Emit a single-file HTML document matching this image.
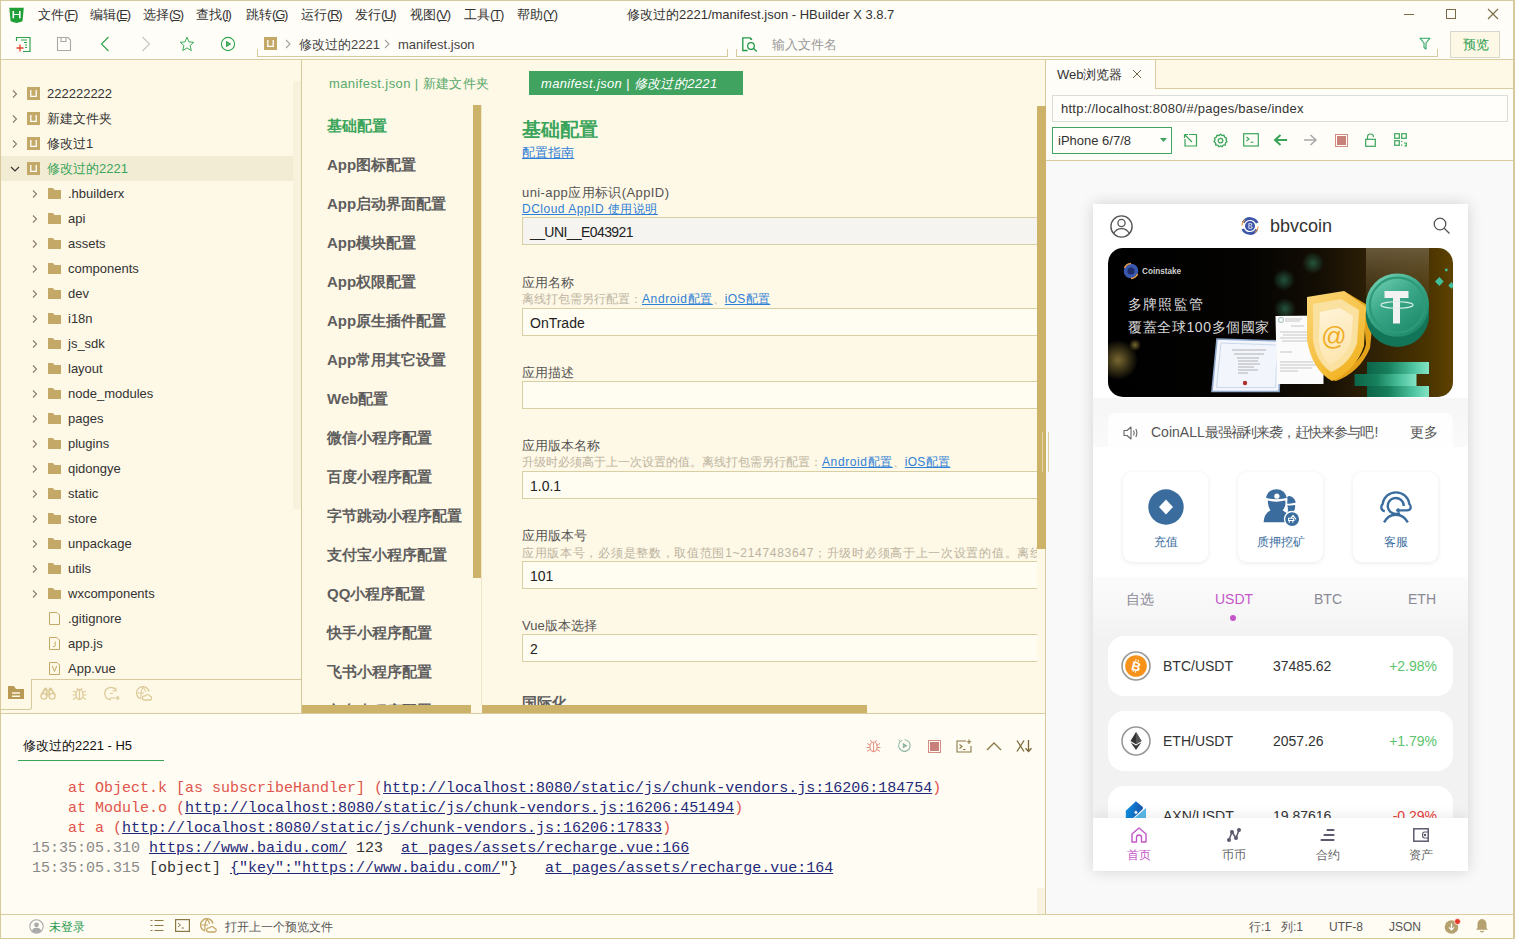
<!DOCTYPE html>
<html><head><meta charset="utf-8">
<style>
*{margin:0;padding:0;box-sizing:border-box}
html,body{width:1515px;height:939px;overflow:hidden}
body{text-spacing-trim:space-all;position:relative;background:#fef8e6;font-family:"Liberation Sans",sans-serif;font-size:13px;color:#333}
.a{position:absolute}
.t{position:absolute;white-space:nowrap;line-height:1}
/* frame */
#win{left:0;top:0;width:1515px;height:939px;border:1px solid #d6ca9c;border-right-width:2px}
#title{left:1px;top:1px;width:1512px;height:59px;background:#fffdf7;border-bottom:1px solid #d9cda0}
#side{left:1px;top:60px;width:300px;height:653px;background:#fef8e6}
#vdiv{left:301px;top:60px;width:1px;height:653px;background:#d6ca9c}
#editor{left:302px;top:60px;width:743px;height:653px;background:#fef8e6}
#rdiv{left:1045px;top:60px;width:1px;height:854px;background:#d6ca9c}
#console{left:1px;top:713px;width:1044px;height:201px;background:#fffcf3;border-top:1px solid #d9cda0}
#status{left:1px;top:914px;width:1512px;height:24px;background:#fffcf3;border-top:1px solid #d9cda0}
#right{left:1046px;top:60px;width:467px;height:854px;background:#fffdf7}
</style></head><body>
<div class="a" id="title"></div>

<!-- title bar -->
<svg class="a" style="left:9px;top:7px" width="16" height="17" viewBox="0 0 16 17"><path d="M0.3 0.8H14.8L13.5 14.2Q10.5 15.2 7.5 16Q4.5 15.2 1.6 14.2Z" fill="#1f9f38"/><path d="M3.5 3.9H5.1V7.1H10V3.9H11.6V11.3H10V8H5.1V11.3H3.5Z" fill="#fff"/></svg>
<div class="t" style="left:38px;top:8px">文件<span style="letter-spacing:-1.2px">(<u>F</u>)</span></div>
<div class="t" style="left:90px;top:8px">编辑<span style="letter-spacing:-1.2px">(<u>E</u>)</span></div>
<div class="t" style="left:143px;top:8px">选择<span style="letter-spacing:-1.2px">(<u>S</u>)</span></div>
<div class="t" style="left:196px;top:8px">查找<span style="letter-spacing:-1.2px">(<u>I</u>)</span></div>
<div class="t" style="left:246px;top:8px">跳转<span style="letter-spacing:-1.2px">(<u>G</u>)</span></div>
<div class="t" style="left:301px;top:8px">运行<span style="letter-spacing:-1.2px">(<u>R</u>)</span></div>
<div class="t" style="left:355px;top:8px">发行<span style="letter-spacing:-1.2px">(<u>U</u>)</span></div>
<div class="t" style="left:410px;top:8px">视图<span style="letter-spacing:-1.2px">(<u>V</u>)</span></div>
<div class="t" style="left:464px;top:8px">工具<span style="letter-spacing:-1.2px">(<u>T</u>)</span></div>
<div class="t" style="left:517px;top:8px">帮助<span style="letter-spacing:-1.2px">(<u>Y</u>)</span></div>
<div class="t" style="left:627px;top:8px">修改过的2221/manifest.json - HBuilder X 3.8.7</div>
<div class="a" style="left:1404px;top:14px;width:10px;height:1px;background:#7a6a45"></div>
<div class="a" style="left:1446px;top:9px;width:10px;height:10px;border:1px solid #7a6a45"></div>
<svg class="a" style="left:1487px;top:8px" width="12" height="12" viewBox="0 0 12 12"><path d="M1 1L11 11M11 1L1 11" stroke="#7a6a45" stroke-width="1.1"/></svg>
<!-- toolbar -->
<svg class="a" style="left:15px;top:36px" width="17" height="17" viewBox="0 0 17 17"><path d="M1.5 5V1.5H15V15.5H8" stroke="#2ea24e" stroke-width="1.2" fill="none"/><path d="M6 4H12M9 6.5H12M10 9H12M10 11.5H12" stroke="#2ea24e" stroke-width="1.2"/><path d="M5 8.5V15.5M1.5 12H8.5" stroke="#d9452b" stroke-width="1.3"/></svg>
<svg class="a" style="left:56px;top:36px" width="16" height="16" viewBox="0 0 16 16"><path d="M1.5 1.5H12L14.5 4V14.5H1.5Z" stroke="#a8a8a8" stroke-width="1.1" fill="none"/><path d="M5 1.5V5.5H10V1.5" stroke="#a8a8a8" stroke-width="1.1" fill="none"/></svg>
<svg class="a" style="left:100px;top:36px" width="10" height="16" viewBox="0 0 10 16"><path d="M8.5 1L1.5 8L8.5 15" stroke="#31a553" stroke-width="1.2" fill="none"/></svg>
<svg class="a" style="left:141px;top:36px" width="10" height="16" viewBox="0 0 10 16"><path d="M1.5 1L8.5 8L1.5 15" stroke="#c8c8c8" stroke-width="1.2" fill="none"/></svg>
<svg class="a" style="left:179px;top:36px" width="16" height="16" viewBox="0 0 16 16"><path d="M8 1.2L10 5.9L14.8 6.3L11.1 9.5L12.3 14.6L8 11.9L3.7 14.6L4.9 9.5L1.2 6.3L6 5.9Z" stroke="#31a553" stroke-width="0.95" fill="none" stroke-linejoin="round"/></svg>
<svg class="a" style="left:220px;top:36px" width="16" height="16" viewBox="0 0 16 16"><circle cx="8" cy="8" r="6.6" stroke="#31a553" stroke-width="1.1" fill="none"/><path d="M6.6 5.6V10.4L10.4 8Z" stroke="#31a553" stroke-width="1.1" fill="#31a553" stroke-linejoin="round"/><path d="M7.6 7.2V8.8L8.8 8Z" fill="#fffdf7"/></svg>
<div class="a" style="left:257px;top:49px;width:471px;height:8px;border-left:1px solid #d6ca9c;border-right:1px solid #d6ca9c;border-bottom:1px solid #d6ca9c"></div>
<div class="a" style="left:736px;top:49px;width:702px;height:8px;border-left:1px solid #d6ca9c;border-right:1px solid #d6ca9c;border-bottom:1px solid #d6ca9c"></div>
<svg class="a" style="left:264px;top:37px" width="13" height="13" viewBox="0 0 13 13"><rect width="13" height="13" fill="#c4a867"/><path d="M3.8 3V9.3H9.2V3" stroke="#fff" stroke-width="1.3" fill="none"/></svg>
<svg class="a" style="left:284px;top:38px" width="8" height="12" viewBox="0 0 8 12"><path d="M2 2L6 6L2 10" stroke="#a0a0a0" stroke-width="1.1" fill="none"/></svg>
<div class="t" style="left:299px;top:38px;color:#444">修改过的2221</div>
<svg class="a" style="left:383px;top:38px" width="8" height="12" viewBox="0 0 8 12"><path d="M2 2L6 6L2 10" stroke="#a0a0a0" stroke-width="1.1" fill="none"/></svg>
<div class="t" style="left:398px;top:38px;color:#444">manifest.json</div>
<svg class="a" style="left:742px;top:37px" width="16" height="15" viewBox="0 0 16 15"><path d="M5.5 13.5H0.8V0.8H8L10 2.8" stroke="#1f9a45" stroke-width="1.3" fill="none"/><path d="M8.2 0.8L10 2.7H8.2Z" fill="#1f9a45"/><circle cx="9" cy="9" r="3.3" stroke="#1f9a45" stroke-width="1.3" fill="none"/><path d="M11.3 11.3L14.8 14.5" stroke="#1f9a45" stroke-width="1.3"/></svg>
<div class="t" style="left:772px;top:38px;color:#999">输入文件名</div>
<svg class="a" style="left:1419px;top:37px" width="12" height="13" viewBox="0 0 12 13"><path d="M1 1.2H11L7 6V12L5 10.5V6Z" stroke="#2fa86a" stroke-width="1.1" fill="none" stroke-linejoin="round"/></svg>
<div class="a" style="left:1450px;top:31px;width:50px;height:27px;border:1px solid #d9d6cc;background:#fdf8e6"></div>
<div class="t" style="left:1463px;top:38px;color:#2a9b4f">预览</div>
<div class="a" id="side"></div>
<div class="a" style="left:293px;top:81px;width:8px;height:428px;background:#f8f1dc"></div>
<div class="a" style="left:1px;top:156px;width:292px;height:25px;background:#f3ecd5"></div>
<svg class="a" style="left:11px;top:89px" width="8" height="10" viewBox="0 0 8 10"><path d="M2 1.5L5.5 5L2 8.5" stroke="#8a7d68" stroke-width="1.1" fill="none"/></svg>
<svg class="a" style="left:27px;top:87px" width="13" height="13" viewBox="0 0 13 13"><rect width="13" height="13" fill="#c4a867"/><path d="M3.8 3V9.3H9.2V3" stroke="#fff" stroke-width="1.3" fill="none"/></svg>
<div class="t" style="left:47px;top:87px;color:#333">222222222</div>
<svg class="a" style="left:11px;top:114px" width="8" height="10" viewBox="0 0 8 10"><path d="M2 1.5L5.5 5L2 8.5" stroke="#8a7d68" stroke-width="1.1" fill="none"/></svg>
<svg class="a" style="left:27px;top:112px" width="13" height="13" viewBox="0 0 13 13"><rect width="13" height="13" fill="#c4a867"/><path d="M3.8 3V9.3H9.2V3" stroke="#fff" stroke-width="1.3" fill="none"/></svg>
<div class="t" style="left:47px;top:112px;color:#333">新建文件夹</div>
<svg class="a" style="left:11px;top:139px" width="8" height="10" viewBox="0 0 8 10"><path d="M2 1.5L5.5 5L2 8.5" stroke="#8a7d68" stroke-width="1.1" fill="none"/></svg>
<svg class="a" style="left:27px;top:137px" width="13" height="13" viewBox="0 0 13 13"><rect width="13" height="13" fill="#c4a867"/><path d="M3.8 3V9.3H9.2V3" stroke="#fff" stroke-width="1.3" fill="none"/></svg>
<div class="t" style="left:47px;top:137px;color:#333">修改过1</div>
<svg class="a" style="left:10px;top:165px" width="10" height="8" viewBox="0 0 10 8"><path d="M1 2L5 6L9 2" stroke="#333" stroke-width="1.2" fill="none"/></svg>
<svg class="a" style="left:27px;top:162px" width="13" height="13" viewBox="0 0 13 13"><rect width="13" height="13" fill="#c4a867"/><path d="M3.8 3V9.3H9.2V3" stroke="#fff" stroke-width="1.3" fill="none"/></svg>
<div class="t" style="left:47px;top:162px;color:#3aa55a">修改过的2221</div>
<svg class="a" style="left:31px;top:189px" width="8" height="10" viewBox="0 0 8 10"><path d="M2 1.5L5.5 5L2 8.5" stroke="#8a7d68" stroke-width="1.1" fill="none"/></svg>
<svg class="a" style="left:48px;top:188px" width="13" height="11" viewBox="0 0 13 11"><path d="M0 0H5L6.5 2H13V11H0Z" fill="#c4a867"/></svg>
<div class="t" style="left:68px;top:187px">.hbuilderx</div>
<svg class="a" style="left:31px;top:214px" width="8" height="10" viewBox="0 0 8 10"><path d="M2 1.5L5.5 5L2 8.5" stroke="#8a7d68" stroke-width="1.1" fill="none"/></svg>
<svg class="a" style="left:48px;top:213px" width="13" height="11" viewBox="0 0 13 11"><path d="M0 0H5L6.5 2H13V11H0Z" fill="#c4a867"/></svg>
<div class="t" style="left:68px;top:212px">api</div>
<svg class="a" style="left:31px;top:239px" width="8" height="10" viewBox="0 0 8 10"><path d="M2 1.5L5.5 5L2 8.5" stroke="#8a7d68" stroke-width="1.1" fill="none"/></svg>
<svg class="a" style="left:48px;top:238px" width="13" height="11" viewBox="0 0 13 11"><path d="M0 0H5L6.5 2H13V11H0Z" fill="#c4a867"/></svg>
<div class="t" style="left:68px;top:237px">assets</div>
<svg class="a" style="left:31px;top:264px" width="8" height="10" viewBox="0 0 8 10"><path d="M2 1.5L5.5 5L2 8.5" stroke="#8a7d68" stroke-width="1.1" fill="none"/></svg>
<svg class="a" style="left:48px;top:263px" width="13" height="11" viewBox="0 0 13 11"><path d="M0 0H5L6.5 2H13V11H0Z" fill="#c4a867"/></svg>
<div class="t" style="left:68px;top:262px">components</div>
<svg class="a" style="left:31px;top:289px" width="8" height="10" viewBox="0 0 8 10"><path d="M2 1.5L5.5 5L2 8.5" stroke="#8a7d68" stroke-width="1.1" fill="none"/></svg>
<svg class="a" style="left:48px;top:288px" width="13" height="11" viewBox="0 0 13 11"><path d="M0 0H5L6.5 2H13V11H0Z" fill="#c4a867"/></svg>
<div class="t" style="left:68px;top:287px">dev</div>
<svg class="a" style="left:31px;top:314px" width="8" height="10" viewBox="0 0 8 10"><path d="M2 1.5L5.5 5L2 8.5" stroke="#8a7d68" stroke-width="1.1" fill="none"/></svg>
<svg class="a" style="left:48px;top:313px" width="13" height="11" viewBox="0 0 13 11"><path d="M0 0H5L6.5 2H13V11H0Z" fill="#c4a867"/></svg>
<div class="t" style="left:68px;top:312px">i18n</div>
<svg class="a" style="left:31px;top:339px" width="8" height="10" viewBox="0 0 8 10"><path d="M2 1.5L5.5 5L2 8.5" stroke="#8a7d68" stroke-width="1.1" fill="none"/></svg>
<svg class="a" style="left:48px;top:338px" width="13" height="11" viewBox="0 0 13 11"><path d="M0 0H5L6.5 2H13V11H0Z" fill="#c4a867"/></svg>
<div class="t" style="left:68px;top:337px">js_sdk</div>
<svg class="a" style="left:31px;top:364px" width="8" height="10" viewBox="0 0 8 10"><path d="M2 1.5L5.5 5L2 8.5" stroke="#8a7d68" stroke-width="1.1" fill="none"/></svg>
<svg class="a" style="left:48px;top:363px" width="13" height="11" viewBox="0 0 13 11"><path d="M0 0H5L6.5 2H13V11H0Z" fill="#c4a867"/></svg>
<div class="t" style="left:68px;top:362px">layout</div>
<svg class="a" style="left:31px;top:389px" width="8" height="10" viewBox="0 0 8 10"><path d="M2 1.5L5.5 5L2 8.5" stroke="#8a7d68" stroke-width="1.1" fill="none"/></svg>
<svg class="a" style="left:48px;top:388px" width="13" height="11" viewBox="0 0 13 11"><path d="M0 0H5L6.5 2H13V11H0Z" fill="#c4a867"/></svg>
<div class="t" style="left:68px;top:387px">node_modules</div>
<svg class="a" style="left:31px;top:414px" width="8" height="10" viewBox="0 0 8 10"><path d="M2 1.5L5.5 5L2 8.5" stroke="#8a7d68" stroke-width="1.1" fill="none"/></svg>
<svg class="a" style="left:48px;top:413px" width="13" height="11" viewBox="0 0 13 11"><path d="M0 0H5L6.5 2H13V11H0Z" fill="#c4a867"/></svg>
<div class="t" style="left:68px;top:412px">pages</div>
<svg class="a" style="left:31px;top:439px" width="8" height="10" viewBox="0 0 8 10"><path d="M2 1.5L5.5 5L2 8.5" stroke="#8a7d68" stroke-width="1.1" fill="none"/></svg>
<svg class="a" style="left:48px;top:438px" width="13" height="11" viewBox="0 0 13 11"><path d="M0 0H5L6.5 2H13V11H0Z" fill="#c4a867"/></svg>
<div class="t" style="left:68px;top:437px">plugins</div>
<svg class="a" style="left:31px;top:464px" width="8" height="10" viewBox="0 0 8 10"><path d="M2 1.5L5.5 5L2 8.5" stroke="#8a7d68" stroke-width="1.1" fill="none"/></svg>
<svg class="a" style="left:48px;top:463px" width="13" height="11" viewBox="0 0 13 11"><path d="M0 0H5L6.5 2H13V11H0Z" fill="#c4a867"/></svg>
<div class="t" style="left:68px;top:462px">qidongye</div>
<svg class="a" style="left:31px;top:489px" width="8" height="10" viewBox="0 0 8 10"><path d="M2 1.5L5.5 5L2 8.5" stroke="#8a7d68" stroke-width="1.1" fill="none"/></svg>
<svg class="a" style="left:48px;top:488px" width="13" height="11" viewBox="0 0 13 11"><path d="M0 0H5L6.5 2H13V11H0Z" fill="#c4a867"/></svg>
<div class="t" style="left:68px;top:487px">static</div>
<svg class="a" style="left:31px;top:514px" width="8" height="10" viewBox="0 0 8 10"><path d="M2 1.5L5.5 5L2 8.5" stroke="#8a7d68" stroke-width="1.1" fill="none"/></svg>
<svg class="a" style="left:48px;top:513px" width="13" height="11" viewBox="0 0 13 11"><path d="M0 0H5L6.5 2H13V11H0Z" fill="#c4a867"/></svg>
<div class="t" style="left:68px;top:512px">store</div>
<svg class="a" style="left:31px;top:539px" width="8" height="10" viewBox="0 0 8 10"><path d="M2 1.5L5.5 5L2 8.5" stroke="#8a7d68" stroke-width="1.1" fill="none"/></svg>
<svg class="a" style="left:48px;top:538px" width="13" height="11" viewBox="0 0 13 11"><path d="M0 0H5L6.5 2H13V11H0Z" fill="#c4a867"/></svg>
<div class="t" style="left:68px;top:537px">unpackage</div>
<svg class="a" style="left:31px;top:564px" width="8" height="10" viewBox="0 0 8 10"><path d="M2 1.5L5.5 5L2 8.5" stroke="#8a7d68" stroke-width="1.1" fill="none"/></svg>
<svg class="a" style="left:48px;top:563px" width="13" height="11" viewBox="0 0 13 11"><path d="M0 0H5L6.5 2H13V11H0Z" fill="#c4a867"/></svg>
<div class="t" style="left:68px;top:562px">utils</div>
<svg class="a" style="left:31px;top:589px" width="8" height="10" viewBox="0 0 8 10"><path d="M2 1.5L5.5 5L2 8.5" stroke="#8a7d68" stroke-width="1.1" fill="none"/></svg>
<svg class="a" style="left:48px;top:588px" width="13" height="11" viewBox="0 0 13 11"><path d="M0 0H5L6.5 2H13V11H0Z" fill="#c4a867"/></svg>
<div class="t" style="left:68px;top:587px">wxcomponents</div>
<svg class="a" style="left:49px;top:612px" width="11" height="13" viewBox="0 0 11 13"><path d="M0.5 0.5H8L10.5 3V12.5H0.5Z" stroke="#c4a867" stroke-width="1" fill="none"/></svg>
<div class="t" style="left:68px;top:612px">.gitignore</div>
<svg class="a" style="left:49px;top:637px" width="11" height="13" viewBox="0 0 11 13"><path d="M0.5 0.5H8L10.5 3V12.5H0.5Z" stroke="#c4a867" stroke-width="1" fill="none"/><path d="M6.2 4.5V8.5Q6.2 9.6 5 9.6H4" stroke="#c4a867" stroke-width="1" fill="none"/></svg>
<div class="t" style="left:68px;top:637px">app.js</div>
<svg class="a" style="left:49px;top:662px" width="11" height="13" viewBox="0 0 11 13"><path d="M0.5 0.5H8L10.5 3V12.5H0.5Z" stroke="#c4a867" stroke-width="1" fill="none"/><path d="M3.3 4L5.5 9.5L7.7 4" stroke="#c4a867" stroke-width="1" fill="none"/></svg>
<div class="t" style="left:68px;top:662px">App.vue</div>
<div class="a" style="left:31px;top:679px;width:270px;height:1px;background:#d6ca9c"></div>
<div class="a" style="left:-4px;top:679px;width:36px;height:31px;border:1px solid #d6ca9c;border-top:none;border-radius:0 0 3px 0"></div>
<svg class="a" style="left:8px;top:686px" width="16" height="13" viewBox="0 0 16 13"><path d="M0 0H6L8 3H16V13H0Z" fill="#b89a55"/><path d="M4 7H12M4 10.3H12" stroke="#fef8e6" stroke-width="1.4"/></svg>
<svg class="a" style="left:40px;top:687px" width="16" height="13" viewBox="0 0 16 13"><circle cx="3.8" cy="9.2" r="2.9" stroke="#dccb9a" stroke-width="1.4" fill="none"/><circle cx="12.2" cy="9.2" r="2.9" stroke="#dccb9a" stroke-width="1.4" fill="none"/><path d="M1.2 8L4 3H7V8.5M15 8L12 3H9V8.5M4 1.5H7M9 1.5H12" stroke="#dccb9a" stroke-width="1.6" fill="none"/><path d="M7 9H9" stroke="#dccb9a" stroke-width="1"/></svg>
<svg class="a" style="left:72px;top:686px" width="15" height="15" viewBox="0 0 15 15"><ellipse cx="7.5" cy="8.5" rx="3.5" ry="5" stroke="#dccb9a" stroke-width="1.3" fill="none"/><path d="M7.5 4V13.5M5 2L6 4M10 2L9 4M1 5L4 6.5M14 5L11 6.5M0.5 9H4M14.5 9H11M1 13.5L4 11.5M14 13.5L11 11.5" stroke="#dccb9a" stroke-width="1.2"/></svg>
<svg class="a" style="left:104px;top:686px" width="16" height="15" viewBox="0 0 16 15"><path d="M12 4.5A6 6 0 1 0 7 13.5" stroke="#dccb9a" stroke-width="1.3" fill="none"/><path d="M12 1.5V5H8.5" stroke="#dccb9a" stroke-width="1.1" fill="none"/><path d="M6 7.5H9M6 12H15M13 10L15 12L13 14" stroke="#dccb9a" stroke-width="1.1" fill="none"/></svg>
<svg class="a" style="left:136px;top:686px" width="16" height="15" viewBox="0 0 16 15"><path d="M13 5.5A6.3 6.3 0 1 0 5 13" stroke="#dccb9a" stroke-width="1.3" fill="none"/><path d="M1.5 7H8M7 1.2Q4.5 5 5 12M7 1.2Q9 3.5 9.5 6" stroke="#dccb9a" stroke-width="1.1" fill="none"/><path d="M8 14H14.5A2 2 0 0 0 14 10.2A2.8 2.8 0 0 0 9 10A2 2 0 0 0 8 14Z" stroke="#dccb9a" stroke-width="1.3" fill="#fef8e6"/></svg>
<div class="a" id="editor" style="overflow:hidden">
</div>
<div class="a" style="left:302px;top:60px;width:743px;height:653px;overflow:hidden" id="edc"><div class="a" style="left:-302px;top:-60px;width:1515px;height:939px"><div class="t" style="left:329px;top:77px;color:#58a86b;letter-spacing:0.4px">manifest.json | 新建文件夹</div>
<div class="a" style="left:529px;top:71px;width:214px;height:24px;background:#40a35f"></div>
<div class="t" style="left:541px;top:77px;color:#fff;font-style:italic;letter-spacing:0.35px">manifest.json | 修改过的2221</div>
<div class="t" style="left:327px;top:118px;font-size:15px;font-weight:bold;color:#3aa55a">基础配置</div>
<div class="t" style="left:327px;top:157px;font-size:15px;font-weight:bold;color:#5e5e5e">App图标配置</div>
<div class="t" style="left:327px;top:196px;font-size:15px;font-weight:bold;color:#5e5e5e">App启动界面配置</div>
<div class="t" style="left:327px;top:235px;font-size:15px;font-weight:bold;color:#5e5e5e">App模块配置</div>
<div class="t" style="left:327px;top:274px;font-size:15px;font-weight:bold;color:#5e5e5e">App权限配置</div>
<div class="t" style="left:327px;top:313px;font-size:15px;font-weight:bold;color:#5e5e5e">App原生插件配置</div>
<div class="t" style="left:327px;top:352px;font-size:15px;font-weight:bold;color:#5e5e5e">App常用其它设置</div>
<div class="t" style="left:327px;top:391px;font-size:15px;font-weight:bold;color:#5e5e5e">Web配置</div>
<div class="t" style="left:327px;top:430px;font-size:15px;font-weight:bold;color:#5e5e5e">微信小程序配置</div>
<div class="t" style="left:327px;top:469px;font-size:15px;font-weight:bold;color:#5e5e5e">百度小程序配置</div>
<div class="t" style="left:327px;top:508px;font-size:15px;font-weight:bold;color:#5e5e5e">字节跳动小程序配置</div>
<div class="t" style="left:327px;top:547px;font-size:15px;font-weight:bold;color:#5e5e5e">支付宝小程序配置</div>
<div class="t" style="left:327px;top:586px;font-size:15px;font-weight:bold;color:#5e5e5e">QQ小程序配置</div>
<div class="t" style="left:327px;top:625px;font-size:15px;font-weight:bold;color:#5e5e5e">快手小程序配置</div>
<div class="t" style="left:327px;top:664px;font-size:15px;font-weight:bold;color:#5e5e5e">飞书小程序配置</div>
<div class="t" style="left:327px;top:703px;font-size:15px;font-weight:bold;color:#5e5e5e">京东小程序配置</div>
<div class="a" style="left:481px;top:105px;width:1px;height:608px;background:#efe6c6"></div>
<div class="a" style="left:473px;top:105px;width:8px;height:473px;background:#cdb36a"></div>
<div class="t" style="left:522px;top:120px;font-size:19px;font-weight:bold;color:#3aa55a">基础配置</div>
<div class="t" style="left:522px;top:146px;color:#2f7fd6;text-decoration:underline">配置指南</div>
<div class="t" style="left:522px;top:186px;color:#555;letter-spacing:0.4px">uni-app应用标识(AppID)</div>
<div class="t" style="left:522px;top:203px;font-size:12px;color:#2f7fd6;text-decoration:underline;letter-spacing:0.5px">DCloud AppID 使用说明</div>
<div class="a" style="left:522px;top:217px;width:530px;height:28px;border:1px solid #d9cfa5;background:#f5f4f0"></div>
<div class="t" style="left:530px;top:225px;font-size:14px;color:#222;letter-spacing:-0.6px">__UNI__E043921</div>
<div class="t" style="left:522px;top:276px;color:#555">应用名称</div>
<div class="t" style="left:522px;top:293px;font-size:12px;color:#bcb4a0">离线打包需另行配置：<span style="color:#2f7fd6;text-decoration:underline;letter-spacing:0.6px">Android配置</span>、<span style="color:#2f7fd6;text-decoration:underline;letter-spacing:0.3px">iOS配置</span></div>
<div class="a" style="left:522px;top:308px;width:530px;height:28px;border:1px solid #d9cfa5;background:#fffcf2"></div>
<div class="t" style="left:530px;top:316px;font-size:14px;color:#222">OnTrade</div>
<div class="t" style="left:522px;top:366px;color:#555">应用描述</div>
<div class="a" style="left:522px;top:381px;width:530px;height:28px;border:1px solid #d9cfa5;background:#fffcf2"></div>
<div class="t" style="left:522px;top:439px;color:#555">应用版本名称</div>
<div class="t" style="left:522px;top:456px;font-size:12px;color:#bcb4a0">升级时必须高于上一次设置的值。离线打包需另行配置：<span style="color:#2f7fd6;text-decoration:underline;letter-spacing:0.6px">Android配置</span>、<span style="color:#2f7fd6;text-decoration:underline;letter-spacing:0.3px">iOS配置</span></div>
<div class="a" style="left:522px;top:471px;width:530px;height:28px;border:1px solid #d9cfa5;background:#fffcf2"></div>
<div class="t" style="left:530px;top:479px;font-size:14px;color:#222">1.0.1</div>
<div class="t" style="left:522px;top:529px;color:#555">应用版本号</div>
<div class="t" style="left:522px;top:547px;font-size:12px;color:#bcb4a0;letter-spacing:0.7px">应用版本号，必须是整数，取值范围1~2147483647；升级时必须高于上一次设置的值。离线打包需另行配置：Android配置、iOS配置</div>
<div class="a" style="left:522px;top:561px;width:530px;height:28px;border:1px solid #d9cfa5;background:#fffcf2"></div>
<div class="t" style="left:530px;top:569px;font-size:14px;color:#222">101</div>
<div class="t" style="left:522px;top:619px;color:#555">Vue版本选择</div>
<div class="a" style="left:522px;top:634px;width:530px;height:28px;border:1px solid #d9cfa5;background:#fffcf2"></div>
<div class="t" style="left:530px;top:642px;font-size:14px;color:#222">2</div>
<div class="t" style="left:522px;top:695px;font-size:15px;font-weight:bold;color:#5e5e5e">国际化</div>
<div class="a" style="left:1037px;top:60px;width:8px;height:653px;background:#fef8e6"></div>
<div class="a" style="left:1037px;top:106px;width:8px;height:443px;background:#cdb36a"></div>
<div class="a" style="left:302px;top:705px;width:169px;height:8px;background:#cdb36a"></div>
<div class="a" style="left:471px;top:705px;width:11px;height:8px;background:#fef8e6"></div>
<div class="a" style="left:482px;top:705px;width:385px;height:8px;background:#cdb36a"></div>
<div class="a" style="left:867px;top:705px;width:170px;height:8px;background:#fef8e6"></div></div></div>
<div class="a" id="console"></div>
<div class="t" style="left:23px;top:739px;color:#111">修改过的2221 - H5</div>
<div class="a" style="left:18px;top:760px;width:146px;height:1px;background:#3aa55a"></div>
<svg class="a" style="left:866px;top:738px" width="15" height="15" viewBox="0 0 15 15"><ellipse cx="7.5" cy="8.8" rx="3.6" ry="4.8" stroke="#e89282" stroke-width="1.1" fill="none"/><path d="M7.5 4.5V13.5M4.5 2L5.8 4.2M10.5 2L9.2 4.2M1 5.5L4 7M14 5.5L11 7M0.5 9.5H3.9M14.5 9.5H11.1M1 13.5L4 11.5M14 13.5L11 11.5" stroke="#e89282" stroke-width="1"/></svg>
<svg class="a" style="left:897px;top:738px" width="15" height="15" viewBox="0 0 15 15"><path d="M3.3 3.4A5.8 5.8 0 1 0 7.5 1.7" stroke="#8fb5a5" stroke-width="1.1" fill="none"/><path d="M1.8 1.5L3.5 3.6L5.5 2.2" stroke="#8fb5a5" stroke-width="1" fill="none"/><path d="M5.8 4.8V10.6L10.5 7.7Z" fill="#8fb5a5"/></svg>
<div class="a" style="left:928px;top:740px;width:13px;height:13px;border:1px solid #d48a85;background:#fffcf3"></div><div class="a" style="left:930px;top:742px;width:9px;height:9px;background:#c8807a"></div>
<svg class="a" style="left:956px;top:739px" width="16" height="14" viewBox="0 0 16 14"><path d="M10 2H1V13H15V7" stroke="#8a7845" stroke-width="1.1" fill="none"/><path d="M3.5 5.5L6 7.5L3.5 9.5M7 10.5H9.5M13 0.5V5M10.8 2.7H15.2" stroke="#8a7845" stroke-width="1.1" fill="none"/></svg>
<svg class="a" style="left:986px;top:741px" width="16" height="10" viewBox="0 0 16 10"><path d="M1 9L8 2L15 9" stroke="#8a7845" stroke-width="1.3" fill="none"/></svg>
<svg class="a" style="left:1016px;top:739px" width="17" height="14" viewBox="0 0 17 14"><path d="M1 1.5L8 12.5M8 1.5L1 12.5" stroke="#7a6838" stroke-width="1.3"/><path d="M12.5 1V12.5M9.5 9.3L12.5 12.5L15.5 9.3" stroke="#7a6838" stroke-width="1.3" fill="none"/></svg>
<div class="a" style="left:32px;top:779px;font-family:'Liberation Mono',monospace;font-size:15px;line-height:20px;white-space:pre;color:#333">    <span style="color:#e0554c">at Object.k [as subscribeHandler] (</span><span style="color:#1f2a7a;text-decoration:underline">http://localhost:8080/static/js/chunk-vendors.js:16206:184754</span><span style="color:#e0554c">)</span>
    <span style="color:#e0554c">at Module.o (</span><span style="color:#1f2a7a;text-decoration:underline">http://localhost:8080/static/js/chunk-vendors.js:16206:451494</span><span style="color:#e0554c">)</span>
    <span style="color:#e0554c">at a (</span><span style="color:#1f2a7a;text-decoration:underline">http://localhost:8080/static/js/chunk-vendors.js:16206:17833</span><span style="color:#e0554c">)</span>
<span style="color:#8a8a8a">15:35:05.310</span> <span style="color:#1f2a7a;text-decoration:underline">https://www.baidu.com/</span> 123  <span style="color:#1f2a7a;text-decoration:underline">at pages/assets/recharge.vue:166</span>
<span style="color:#8a8a8a">15:35:05.315</span> [object] <span style="color:#1f2a7a;text-decoration:underline">{"key":"https://www.baidu.com/</span>"}   <span style="color:#1f2a7a;text-decoration:underline">at pages/assets/recharge.vue:164</span></div>
<div class="a" style="left:1037px;top:888px;width:8px;height:26px;background:#f8f2e0"></div>
<div class="a" id="right"></div>
<div class="a" style="left:1046px;top:60px;width:467px;height:29px;background:#fef8e6;border-bottom:1px solid #d9cda0"></div>
<div class="a" style="left:1046px;top:60px;width:110px;height:29px;background:#fffdf7;border-right:1px solid #d9cda0"></div>
<div class="t" style="left:1057px;top:68px;color:#333">Web浏览器</div>
<svg class="a" style="left:1132px;top:69px" width="10" height="10" viewBox="0 0 10 10"><path d="M1 1L9 9M9 1L1 9" stroke="#6e6448" stroke-width="1"/></svg>
<div class="a" style="left:1052px;top:95px;width:456px;height:27px;border:1px solid #dcdcd8;background:#fffefa"></div>
<div class="t" style="left:1061px;top:102px;color:#333;letter-spacing:0.25px">http://localhost:8080/#/pages/base/index</div>
<div class="a" style="left:1052px;top:127px;width:120px;height:27px;border:1px solid #40a35f;background:#fffefa"></div>
<div class="t" style="left:1058px;top:134px;color:#333">iPhone 6/7/8</div>
<svg class="a" style="left:1160px;top:138px" width="7" height="4" viewBox="0 0 7 4"><path d="M0 0H7L3.5 4Z" fill="#40a35f"/></svg>
<svg class="a" style="left:1183px;top:133px" width="15" height="14" viewBox="0 0 15 14"><path d="M6 1.5H13.5V13H2V6" stroke="#3aa55a" stroke-width="1.2" fill="none"/><path d="M1.5 1.5L9 9M1.5 1.5V5M1.5 1.5H5" stroke="#3aa55a" stroke-width="1.2" fill="none"/></svg>
<svg class="a" style="left:1213px;top:133px" width="15" height="15" viewBox="0 0 15 15"><path d="M7.5 1.2L9 2.6L11 2.2L11.6 4.2L13.5 5L13 7L14 8.7L12.4 10L12.3 12L10.2 12.2L9 13.8L7.5 12.8L6 13.8L4.8 12.2L2.7 12L2.6 10L1 8.7L2 7L1.5 5L3.4 4.2L4 2.2L6 2.6Z" stroke="#3aa55a" stroke-width="1.3" fill="none" stroke-linejoin="round"/><circle cx="7.5" cy="7.6" r="2.3" stroke="#3aa55a" stroke-width="1.3" fill="none"/></svg>
<svg class="a" style="left:1243px;top:133px" width="16" height="14" viewBox="0 0 16 14"><rect x="0.7" y="0.7" width="14.6" height="12.3" stroke="#3aa55a" stroke-width="1.2" fill="none"/><path d="M3.5 4L6 6L3.5 8M7.5 9.3H10.5" stroke="#3aa55a" stroke-width="1.1" fill="none"/></svg>
<svg class="a" style="left:1273px;top:133px" width="15" height="14" viewBox="0 0 15 14"><path d="M14 7H2.5M7.5 2L2 7L7.5 12" stroke="#3aa55a" stroke-width="2" fill="none"/></svg>
<svg class="a" style="left:1303px;top:133px" width="15" height="14" viewBox="0 0 15 14"><path d="M1 7H12.5M7.5 2L13 7L7.5 12" stroke="#a8a8a8" stroke-width="1.5" fill="none"/></svg>
<div class="a" style="left:1335px;top:134px;width:13px;height:13px;border:1px solid #d48a85"></div><div class="a" style="left:1337px;top:136px;width:9px;height:9px;background:#c8807a"></div>
<svg class="a" style="left:1365px;top:133px" width="11" height="14" viewBox="0 0 11 14"><rect x="0.7" y="6.3" width="9.6" height="7" stroke="#3aa55a" stroke-width="1.2" fill="none"/><path d="M2.5 6.3V4Q2.5 1 5.5 1Q8.5 1 8.5 4" stroke="#3aa55a" stroke-width="1.2" fill="none"/></svg>
<svg class="a" style="left:1394px;top:133px" width="13" height="14" viewBox="0 0 13 14"><rect x="0.7" y="0.7" width="4.6" height="4.6" stroke="#3aa55a" stroke-width="1.2" fill="none"/><rect x="7.7" y="0.7" width="4.6" height="4.6" stroke="#3aa55a" stroke-width="1.2" fill="none"/><rect x="0.7" y="7.7" width="4.6" height="4.6" stroke="#3aa55a" stroke-width="1.2" fill="none"/><path d="M7.7 8V9M7.7 11.5V12.8M10 10H12.3V12.8H10.5" stroke="#3aa55a" stroke-width="1.2" fill="none"/></svg>
<div class="a" style="left:1046px;top:160px;width:467px;height:1px;background:#d9cda0"></div>
<div class="a" style="left:1046px;top:161px;width:467px;height:753px;background:#f9f9f9"></div>
<div class="a" style="left:1093px;top:204px;width:375px;height:667px;background:#fff;box-shadow:0 0 14px rgba(0,0,0,0.16);overflow:hidden">
<svg class="a" style="left:17px;top:11px" width="23" height="23" viewBox="0 0 23 23"><circle cx="11.5" cy="11.5" r="10.6" stroke="#555" stroke-width="1.4" fill="none"/><circle cx="11.5" cy="8" r="3.6" stroke="#555" stroke-width="1.3" fill="none"/><path d="M3.8 18.5Q6 13.6 11.5 13.6Q17 13.6 19.2 18.5" stroke="#555" stroke-width="1.3" fill="none"/></svg>
<svg class="a" style="left:147px;top:12px" width="20" height="20" viewBox="0 0 20 20"><path d="M3.2 6.5A8 8 0 0 1 17.3 7" stroke="#3d56a8" stroke-width="2.8" fill="none"/><path d="M16.8 13.5A8 8 0 0 1 2.7 13" stroke="#3d56a8" stroke-width="2.8" fill="none"/><path d="M1.8 9.5A8.3 8.3 0 0 1 5 3.6" stroke="#f0a040" stroke-width="1.2" fill="none"/><path d="M18.2 10.5A8.3 8.3 0 0 1 15 16.4" stroke="#f0a040" stroke-width="1.2" fill="none"/><circle cx="10" cy="10" r="5" fill="#3d56a8"/><path d="M8.4 7.2H10.8Q12.3 7.2 12.3 8.5Q12.3 9.6 11 9.8Q12.6 10 12.6 11.4Q12.6 12.8 10.9 12.8H8.4ZM9.4 8.1V9.5H10.6Q11.3 9.5 11.3 8.8Q11.3 8.1 10.6 8.1ZM9.4 10.3V11.9H10.8Q11.6 11.9 11.6 11.1Q11.6 10.3 10.8 10.3Z" fill="#fff" opacity="0.85"/></svg>
<div class="t" style="left:177px;top:13px;font-size:18px;color:#333">bbvcoin</div>
<svg class="a" style="left:340px;top:13px" width="18" height="18" viewBox="0 0 18 18"><circle cx="7" cy="7" r="5.8" stroke="#555" stroke-width="1.3" fill="none"/><path d="M11.2 11.2L16.5 16.5" stroke="#555" stroke-width="1.3"/></svg>
<svg class="a" style="left:15px;top:44px" width="345" height="150" viewBox="0 0 345 150">
<defs>
<clipPath id="bc"><rect width="345" height="149" rx="15" ry="15"/></clipPath>
<linearGradient id="bg1" x1="0" y1="0" x2="1" y2="0"><stop offset="0" stop-color="#000"/><stop offset="0.4" stop-color="#040302"/><stop offset="0.62" stop-color="#140e04"/><stop offset="0.75" stop-color="#2c1f06"/><stop offset="0.93" stop-color="#4a3400"/><stop offset="1" stop-color="#5e4200"/></linearGradient>
<radialGradient id="glow1"><stop offset="0" stop-color="#a08a40" stop-opacity="0.75"/><stop offset="1" stop-color="#a08a40" stop-opacity="0"/></radialGradient>
<radialGradient id="glow2"><stop offset="0" stop-color="#2f7a5a" stop-opacity="0.65"/><stop offset="1" stop-color="#2f7a5a" stop-opacity="0"/></radialGradient>
<linearGradient id="band" x1="0" y1="0" x2="0" y2="1"><stop offset="0" stop-color="#6e5e40" stop-opacity="0.9"/><stop offset="0.55" stop-color="#4a3810" stop-opacity="0"/></linearGradient>
<linearGradient id="coin" x1="0" y1="0" x2="0.7" y2="1"><stop offset="0" stop-color="#7fd8bc"/><stop offset="0.5" stop-color="#3aa889"/><stop offset="1" stop-color="#1e8a6a"/></linearGradient>
<linearGradient id="shield" x1="0" y1="0" x2="0.6" y2="1"><stop offset="0" stop-color="#fcd77a"/><stop offset="1" stop-color="#f2b424"/></linearGradient>
<linearGradient id="sin" x1="0" y1="0" x2="0.3" y2="1"><stop offset="0" stop-color="#fff4d8"/><stop offset="1" stop-color="#fde6b0"/></linearGradient>
<linearGradient id="stack" x1="0" y1="0" x2="1" y2="0"><stop offset="0" stop-color="#0c6448"/><stop offset="0.35" stop-color="#17805c"/><stop offset="0.75" stop-color="#4fc4a0"/><stop offset="1" stop-color="#86e4c6"/></linearGradient>
</defs>
<g clip-path="url(#bc)">
<rect width="345" height="150" fill="url(#bg1)"/>
<rect x="258" y="0" width="63" height="150" fill="url(#band)"/>
<circle cx="10" cy="112" r="20" fill="url(#glow1)"/>
<circle cx="27" cy="97" r="6" fill="url(#glow1)"/>
<circle cx="205" cy="15" r="11" fill="url(#glow2)"/>
<circle cx="176" cy="32" r="11" fill="url(#glow2)"/>
<circle cx="177" cy="61" r="11" fill="url(#glow2)"/>
<circle cx="23" cy="23" r="7.3" fill="#3a58b0"/><path d="M16.5 20A7.5 7.5 0 0 1 23 15.5" stroke="#e89a40" stroke-width="1.6" fill="none"/><path d="M29.5 26A7.5 7.5 0 0 1 23 30.5" stroke="#e89a40" stroke-width="1.6" fill="none"/><circle cx="23" cy="23" r="3.6" fill="#1e2c6a"/>
<text x="34" y="26" font-size="8.2" font-weight="bold" fill="#d0d0d0" font-family="Liberation Sans">Coinstake</text>
<text x="20" y="61" font-size="14" fill="#d8d8d8" letter-spacing="1.2">多牌照監管</text>
<text x="20" y="84" font-size="14" fill="#d8d8d8" letter-spacing="0.6">覆蓋全球100多個國家</text>
<path d="M109 91L173.5 93L171 143.5L104 143.5Z" fill="#f2f5fb" stroke="#8fa8cc" stroke-width="1.6"/>
<path d="M113 95L169.5 97L167.5 139.5L108.5 139.5Z" fill="none" stroke="#c0d0e6" stroke-width="0.8"/>
<path d="M124 102H158M126 106H156M129 110H151M130 113H150M130 116H152M130 119H146M130 122H150M130 125H140" stroke="#a0a0a0" stroke-width="0.8"/>
<circle cx="137" cy="135" r="2.2" fill="#b03030"/>
<path d="M167.5 68L215.5 67.5L215.5 136L169 136Z" fill="#fbfbfb"/>
<circle cx="173" cy="72" r="2.5" fill="none" stroke="#8aa" stroke-width="0.8"/>
<path d="M177 71H194M177 73H192M183 78H196M172 84H210M175 87H208M172 90H206M174 93H200M172 104H184M172 114H205M172 117H208M172 120H204M172 123H190" stroke="#b0b0b0" stroke-width="0.7"/>
<path d="M236 43L266 61L262 100Q252 124 228 133L224 132L232 126Q255 112 258 96L255 60L236 46Z" fill="#e4a21a"/>
<path d="M199 49L236 43L258 59L256 98Q248 122 224 133Q204 122 199 92Z" fill="url(#shield)"/>
<path d="M205 56L233 51L251 62L249 95Q242 116 223 124Q208 114 205 92Z" fill="#fbe1a0"/>
<path d="M212 64L232 60L245 68L243 94Q237 110 222 117Q212 108 211 92Z" fill="url(#sin)"/>
<text x="226" y="97" font-size="25" fill="#f0ac24" text-anchor="middle" font-family="Liberation Sans">@</text>
<rect x="259" y="114" width="62" height="12" fill="url(#stack)"/>
<rect x="246.5" y="126" width="62" height="12" fill="url(#stack)"/>
<rect x="259" y="138" width="62" height="12" fill="url(#stack)"/>
<ellipse cx="289.4" cy="67" rx="31.7" ry="32" fill="#137558"/>
<circle cx="289.4" cy="57.1" r="31.7" fill="url(#coin)"/>
<circle cx="289.4" cy="57.1" r="27.5" fill="none" stroke="#2e9a78" stroke-width="2.2"/>
<path d="M276.5 43H300.5V50H292V75.5H285V50H276.5Z" fill="#f2f2f2"/>
<ellipse cx="289" cy="57" rx="16" ry="3.2" fill="none" stroke="#d8efe6" stroke-width="1.1"/>
<circle cx="338.3" cy="22" r="1.4" fill="#3fc09a"/><path d="M331.4 29L335.7 33.5L331.4 38L327 33.5Z" fill="#3fc09a"/><path d="M343.4 34L346.5 37.4L343.4 40.8L340.3 37.4Z" fill="#3fc09a"/>
</g></svg>
<div class="a" style="left:0;top:194px;width:375px;height:49px;background:linear-gradient(#f6f6f6,#fafafa)"></div>
<div class="a" style="left:15px;top:209px;width:345px;height:34px;background:#fefefe;border-radius:8px 8px 0 0"></div>
<svg class="a" style="left:30px;top:222px" width="16" height="14" viewBox="0 0 16 14"><path d="M1 4.5H4L8 1V13L4 9.5H1Z" stroke="#666" stroke-width="1.1" fill="none" stroke-linejoin="round"/><path d="M10.5 4.5Q12 7 10.5 9.5M12.8 3Q15 7 12.8 11" stroke="#666" stroke-width="1.1" fill="none"/></svg>
<div class="t" style="left:58px;top:221px;font-size:14px;color:#555">CoinALL<span style="letter-spacing:-1.1px">最强福利来袭，赶快来参与</span>吧<span style="margin-left:1px">!</span></div>
<div class="t" style="left:317px;top:221px;font-size:14px;color:#555">更多</div>
<div class="a" style="left:30px;top:268px;width:85px;height:90px;background:#fff;border-radius:9px;box-shadow:0 1px 5px rgba(0,0,0,0.09)"></div>
<div class="t" style="left:30px;top:332px;width:85px;text-align:center;font-size:12px;color:#3a6d9e">充值</div>
<div class="a" style="left:145px;top:268px;width:85px;height:90px;background:#fff;border-radius:9px;box-shadow:0 1px 5px rgba(0,0,0,0.09)"></div>
<div class="t" style="left:145px;top:332px;width:85px;text-align:center;font-size:12px;color:#3a6d9e">质押挖矿</div>
<div class="a" style="left:260px;top:268px;width:85px;height:90px;background:#fff;border-radius:9px;box-shadow:0 1px 5px rgba(0,0,0,0.09)"></div>
<div class="t" style="left:260px;top:332px;width:85px;text-align:center;font-size:12px;color:#3a6d9e">客服</div>
<svg class="a" style="left:55px;top:285px" width="36" height="36" viewBox="0 0 36 36"><circle cx="18" cy="18" r="17.7" fill="#3a6d9e"/><path d="M18 10.5L25 18L18 25.5L11 18Z" fill="#fff"/></svg>
<svg class="a" style="left:170px;top:285px" width="38" height="40" viewBox="0 0 38 40"><path d="M3 8.8Q5 0.3 13.4 0.3Q21.8 0.3 23.8 8.8Q21 10.2 13.4 10.2Q5.8 10.2 3 8.8Z" fill="#3a6d9e"/><circle cx="13.9" cy="7.2" r="2.6" fill="#fff"/><path d="M4.8 11.5Q13.4 13.8 22.2 11.5Q23.2 16 21 19.5L19.6 21.3Q21.5 23 24 24.2L25 33.3H0.6Q1 24.5 7.5 21.3Q5 18 4.8 11.5Z" fill="#3a6d9e"/><path d="M24.2 8Q25.5 6.8 26.5 7Q31.5 8 32.8 13.5Q28.5 15 24 14.5Q25 11.3 24.2 8Z" fill="#3a6d9e"/><path d="M24.3 16.2Q28.5 16.8 32 16Q32.5 19.5 31 22Q28 22.5 24.5 24Q25.5 20 24.3 16.2Z" fill="#3a6d9e"/><circle cx="29.1" cy="30.1" r="7.6" fill="#3a6d9e" stroke="#fff" stroke-width="1.3"/><path d="M25.6 29.2H30.2L31 31.5H25.6ZM26.3 31.8V33.8M29.8 31.8V33.8M28 29L30 26.5L33 30.3" stroke="#fff" stroke-width="1.1" fill="none"/></svg>
<svg class="a" style="left:287px;top:286px" width="33" height="34" viewBox="0 0 33 34"><path d="M23.8 16A8 8 0 1 0 19.8 22.9" stroke="#3a6d9e" stroke-width="2.4" fill="none"/><path d="M4.8 21.4Q1.2 20.2 1.3 17.2Q1.4 15.2 2.6 14.2A13.5 13.5 0 0 1 29.4 14.2Q30.7 15.2 30.7 17.2Q30.7 20.3 27 20.3H18" stroke="#3a6d9e" stroke-width="2.3" fill="none"/><circle cx="18.1" cy="20.2" r="1.9" fill="#3a6d9e"/><path d="M4.1 32.4Q8 24.7 15.8 24.7Q23.6 24.7 27.8 32.4" stroke="#3a6d9e" stroke-width="2.4" fill="none"/></svg>
<div class="a" style="left:0;top:373px;width:375px;height:241px;background:linear-gradient(#fbfbfb,#f6f6f6 40px,#f2f2f2 62px,#f2f2f2)"></div>
<div class="t" style="left:33px;top:388px;font-size:14px;color:#8a8a96">自选</div>
<div class="t" style="left:122px;top:388px;font-size:14px;color:#c356c9">USDT</div>
<div class="a" style="left:137px;top:411px;width:6px;height:6px;border-radius:50%;background:#c356c9"></div>
<div class="t" style="left:221px;top:388px;font-size:14px;color:#8a8a96">BTC</div>
<div class="t" style="left:315px;top:388px;font-size:14px;color:#8a8a96">ETH</div>
<div class="a" style="left:15px;top:432px;width:345px;height:60px;background:#fff;border-radius:16px"></div>
<svg class="a" style="left:28px;top:447px" width="30" height="30" viewBox="0 0 30 30"><circle cx="15" cy="15" r="14" stroke="#999" stroke-width="1.6" fill="#fff"/><circle cx="15" cy="15" r="10.8" fill="#f7931a"/><g transform="rotate(14 15 15)"><text x="15.3" y="19.6" font-size="12.5" fill="#fff" text-anchor="middle" font-family="Liberation Sans" font-weight="bold">B</text><path d="M13.5 8.5V10.5M16 8.5V10.5M13.5 19.5V21.5M16 19.5V21.5" stroke="#fff" stroke-width="1"/></g></svg>
<div class="t" style="left:70px;top:455px;font-size:14px;color:#333">BTC/USDT</div>
<div class="t" style="left:180px;top:455px;font-size:14px;color:#333">37485.62</div>
<div class="t" style="right:31px;top:455px;font-size:14px;color:#5cc46e">+2.98%</div>
<div class="a" style="left:15px;top:507px;width:345px;height:60px;background:#fff;border-radius:16px"></div>
<svg class="a" style="left:28px;top:522px" width="30" height="30" viewBox="0 0 30 30"><circle cx="15" cy="15" r="14" stroke="#999" stroke-width="1.6" fill="#fff"/><path d="M15 6L20.5 15L15 18.3L9.5 15Z" fill="#343434"/><path d="M15 6L20.5 15L15 18.3Z" fill="#555"/><path d="M15 19.5L20.5 16.2L15 24L9.5 16.2Z" fill="#3c3c3c"/></svg>
<div class="t" style="left:70px;top:530px;font-size:14px;color:#333">ETH/USDT</div>
<div class="t" style="left:180px;top:530px;font-size:14px;color:#333">2057.26</div>
<div class="t" style="right:31px;top:530px;font-size:14px;color:#5cc46e">+1.79%</div>
<div class="a" style="left:15px;top:582px;width:345px;height:60px;background:#fff;border-radius:16px"></div>
<svg class="a" style="left:28px;top:596px" width="30" height="30" viewBox="0 0 30 30"><defs><linearGradient id="axg" x1="0" y1="0" x2="1" y2="0"><stop offset="0" stop-color="#0d8fe0"/><stop offset="1" stop-color="#1b56b0"/></linearGradient></defs><path d="M4.8 10.8L14.9 1.2L21.8 7V9L11.7 18.5H4.8Z" fill="url(#axg)"/><path d="M13 18.5L25 8V18.5Z" fill="#5ab8e8"/><path d="M14.9 10.6L16.7 12.4L14.9 14.2L13.1 12.4Z" fill="#fff"/></svg>
<div class="t" style="left:70px;top:605px;font-size:14px;color:#333">AXN/USDT</div>
<div class="t" style="left:180px;top:605px;font-size:14px;color:#333">19.87616</div>
<div class="t" style="right:31px;top:605px;font-size:14px;color:#e8403a">-0.29%</div>
<div class="a" style="left:0;top:614px;width:375px;height:53px;background:#fff;box-shadow:0 -3px 12px rgba(0,0,0,0.07)"></div>
<svg class="a" style="left:38px;top:623px" width="16" height="16" viewBox="0 0 16 16"><path d="M1 15V7L8 1L15 7V15H10.5V10.5Q10.5 8 8 8Q5.5 8 5.5 10.5V15Z" stroke="#c356c9" stroke-width="1.4" fill="none" stroke-linejoin="round"/></svg>
<svg class="a" style="left:133px;top:623px" width="16" height="16" viewBox="0 0 16 16"><path d="M3 13L6 5L10 11L13 3" stroke="#5c5a6e" stroke-width="1.5" fill="none"/><circle cx="3" cy="13" r="2" fill="#5c5a6e"/><circle cx="6" cy="5" r="2" fill="#5c5a6e"/><circle cx="10" cy="11" r="2" fill="#5c5a6e"/><circle cx="13" cy="3" r="2" fill="#5c5a6e"/></svg>
<svg class="a" style="left:227px;top:623px" width="16" height="16" viewBox="0 0 16 16"><path d="M7.5 3H13.5M4.5 8H13.5M1.5 13H13.5" stroke="#5c5a6e" stroke-width="2.2" stroke-linecap="round"/></svg>
<svg class="a" style="left:320px;top:623px" width="16" height="16" viewBox="0 0 16 16"><rect x="0.8" y="1.8" width="14.4" height="12.4" stroke="#5c5a6e" stroke-width="1.5" fill="none"/><path d="M15 5H11.5Q9.5 5 9.5 8Q9.5 11 11.5 11H15" stroke="#5c5a6e" stroke-width="1.2" fill="none"/><circle cx="12" cy="8" r="1.2" fill="#5c5a6e"/></svg>
<div class="t" style="left:26px;top:645px;width:40px;text-align:center;font-size:12px;color:#c356c9">首页</div>
<div class="t" style="left:121px;top:645px;width:40px;text-align:center;font-size:12px;color:#666">币币</div>
<div class="t" style="left:215px;top:645px;width:40px;text-align:center;font-size:12px;color:#666">合约</div>
<div class="t" style="left:308px;top:645px;width:40px;text-align:center;font-size:12px;color:#666">资产</div>
</div>
<div class="a" id="status"></div>
<svg class="a" style="left:29px;top:919px" width="15" height="15" viewBox="0 0 15 15"><circle cx="7.5" cy="7.5" r="6.7" stroke="#aaa" stroke-width="1.1" fill="none"/><circle cx="7.5" cy="5.8" r="2.4" fill="#aaa"/><path d="M3 12Q3.5 8.8 7.5 8.8Q11.5 8.8 12 12Q10 14 7.5 14Q5 14 3 12Z" fill="#aaa"/></svg>
<div class="t" style="left:49px;top:921px;font-size:12px;color:#2a9b4f">未登录</div>
<svg class="a" style="left:150px;top:919px" width="14" height="13" viewBox="0 0 14 13"><path d="M0.5 1.5H2.5M0.5 6.5H2.5M0.5 11.5H2.5M4.5 1.5H13.5M4.5 6.5H13.5M4.5 11.5H13.5" stroke="#8a7845" stroke-width="1.2"/></svg>
<svg class="a" style="left:175px;top:919px" width="15" height="13" viewBox="0 0 15 13"><rect x="0.6" y="0.6" width="13.8" height="11.8" stroke="#8a7845" stroke-width="1.2" fill="none"/><path d="M3 4L5.5 6L3 8M6.5 9H9" stroke="#8a7845" stroke-width="1" fill="none"/></svg>
<svg class="a" style="left:200px;top:918px" width="18" height="15" viewBox="0 0 18 15"><path d="M13 5.5A6.3 6.3 0 1 0 5 13" stroke="#c4a867" stroke-width="1.4" fill="none"/><path d="M1.5 7H8M7 1.2Q4.5 5 5 12M7 1.2Q9 3.5 9.5 6" stroke="#c4a867" stroke-width="1.2" fill="none"/><path d="M8 14H15A2 2 0 0 0 14.5 10.2A2.8 2.8 0 0 0 9.5 10A2 2 0 0 0 8 14Z" stroke="#c4a867" stroke-width="1.3" fill="#fffcf3"/></svg>
<div class="t" style="left:225px;top:921px;font-size:12px;color:#555">打开上一个预览文件</div>
<div class="t" style="left:1249px;top:921px;font-size:12px;color:#555">行:1</div>
<div class="t" style="left:1281px;top:921px;font-size:12px;color:#555">列:1</div>
<div class="t" style="left:1329px;top:921px;font-size:12px;color:#555">UTF-8</div>
<div class="t" style="left:1389px;top:921px;font-size:12px;color:#555">JSON</div>
<svg class="a" style="left:1444px;top:918px" width="18" height="16" viewBox="0 0 18 16"><circle cx="7.5" cy="9" r="6.8" fill="#b5a070"/><path d="M7.5 5.5V11.5M5 9.3L7.5 11.8L10 9.3" stroke="#fff" stroke-width="1.2" fill="none"/><circle cx="13.5" cy="3.5" r="3" fill="#e8382c" stroke="#fffcf3" stroke-width="0.8"/></svg>
<svg class="a" style="left:1475px;top:918px" width="14" height="15" viewBox="0 0 14 15"><path d="M7 1Q2.5 1.5 2.5 6.5V10L1 11.8H13L11.5 10V6.5Q11.5 1.5 7 1Z" fill="#b5a070"/><path d="M5.3 13Q7 14.8 8.7 13" stroke="#b5a070" stroke-width="1.3" fill="none"/></svg>

<div class="a" id="vdiv"></div>
<div class="a" id="rdiv"></div>
<div class="a" style="left:1037px;top:106px;width:9px;height:443px;background:#cdb36a"></div>
<div class="a" style="left:1042px;top:432px;width:1px;height:40px;background:#e0d3a8"></div>
<div class="a" style="left:1048px;top:432px;width:1px;height:40px;background:#dccfa0"></div>
<div class="a" id="win"></div>
</body></html>
